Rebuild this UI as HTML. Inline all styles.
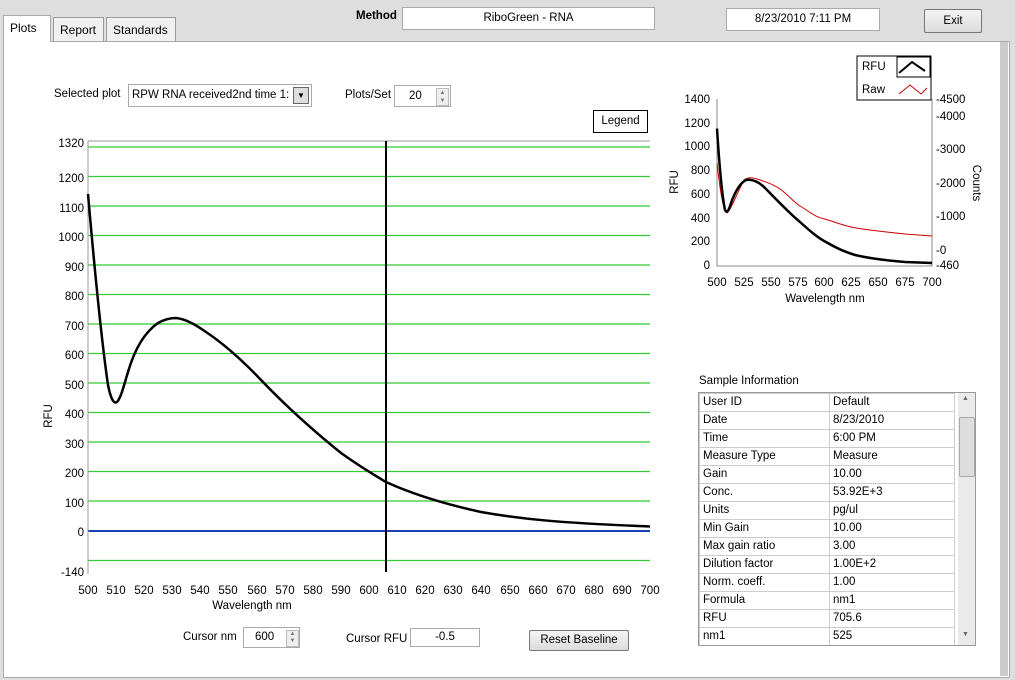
<!DOCTYPE html>
<html><head><meta charset="utf-8"><style>
body{margin:0;width:1015px;height:680px;background:#dedede;font-family:"Liberation Sans",sans-serif;font-size:11.5px;color:#000;position:relative;overflow:hidden}
.a{position:absolute}
.box{position:absolute;background:#fff;border:1px solid #aaa;box-sizing:border-box;text-align:center}
.tab{position:absolute;top:17px;height:24px;background:#f0f0f0;border:1px solid #999;border-bottom:none;box-sizing:border-box;padding:5px 6px 0;font-size:12px}
.btn{position:absolute;background:linear-gradient(#f4f4f4,#dcdcdc);border:1px solid #777;border-radius:2px;box-sizing:border-box;text-align:center}
table{border-collapse:collapse;font-size:11.5px}
td{border:1px solid #ccc;height:17px;padding:0 3px;line-height:17px}
</style></head><body>
<div class="a" style="left:3px;top:41px;width:1005px;height:635px;background:#fff;border:1px solid #aaa"></div>
<div class="tab" style="left:3px;top:15px;height:27px;background:#fff;width:48px;border-color:#aaa">Plots</div>
<div class="tab" style="left:53px;width:51px">Report</div>
<div class="tab" style="left:106px;width:70px">Standards</div>
<div class="a" style="left:356px;top:10px;font-weight:bold">Method</div>
<div class="box" style="left:402px;top:7px;width:253px;height:23px;line-height:21px">RiboGreen - RNA</div>
<div class="box" style="left:726px;top:8px;width:154px;height:23px;line-height:21px">8/23/2010  7:11 PM</div>
<div class="btn" style="left:924px;top:9px;width:58px;height:24px;line-height:22px">Exit</div>
<div class="a" style="left:54px;top:88px">Selected plot</div>
<div class="box" style="left:128px;top:84px;width:184px;height:23px;line-height:20px;text-align:left;padding-left:3px;overflow:hidden">RPW RNA received2nd time 1:</div>
<div class="a" style="left:293px;top:87px;width:16px;height:17px;background:#ddd;border:1px solid #666;box-sizing:border-box;font-size:8px;text-align:center;line-height:15px">▼</div>
<div class="a" style="left:345px;top:89px">Plots/Set</div>
<div class="box" style="left:394px;top:85px;width:57px;height:22px;line-height:20px;text-align:left;padding-left:14px">20</div>
<div class="a" style="left:436px;top:88px;width:11px;height:16px;background:#eee;border:1px solid #bbb;font-size:6px;line-height:8px;text-align:center;color:#777">▲<br>▼</div>
<div class="box" style="left:593px;top:110px;width:55px;height:23px;line-height:21px;border-color:#000">Legend</div>
<svg class="a" style="left:0;top:0" width="1015" height="680" font-family="Liberation Sans" font-size="11.5">
<g stroke="#3c3" stroke-width="1.2">
<line x1="88" x2="650" y1="147" y2="147"/><line x1="88" x2="650" y1="176.5" y2="176.5"/><line x1="88" x2="650" y1="206" y2="206"/><line x1="88" x2="650" y1="235.5" y2="235.5"/><line x1="88" x2="650" y1="265" y2="265"/><line x1="88" x2="650" y1="294.5" y2="294.5"/><line x1="88" x2="650" y1="324" y2="324"/><line x1="88" x2="650" y1="353.5" y2="353.5"/><line x1="88" x2="650" y1="383" y2="383"/><line x1="88" x2="650" y1="412.5" y2="412.5"/><line x1="88" x2="650" y1="442" y2="442"/><line x1="88" x2="650" y1="471.5" y2="471.5"/><line x1="88" x2="650" y1="501" y2="501"/><line x1="88" x2="650" y1="560.5" y2="560.5"/>
</g>
<line x1="88" x2="650" y1="531" y2="531" stroke="#1a3fb0" stroke-width="2"/>
<path d="M88 141H650M88 141V574" stroke="#999" fill="none"/>
<line x1="386" x2="386" y1="141" y2="572" stroke="#000" stroke-width="2"/>
<path d="M88 194C92 240 100 330 108 385C111 400 114 404 117 402C121 398 124 385 128 372C135 348 145 332 158 323C165 319 170 318 176 318C186 319 196 325 206 332C224 344 244 362 262 381C285 405 310 428 341 453C355 463 369 472 386 482C410 493 440 503 481 512C520 519 560 523 650 526.5" stroke="#000" stroke-width="2.5" fill="none" stroke-linejoin="round"/>
<g text-anchor="end">
<text x="84" y="147">1320</text><text x="84" y="182">1200</text><text x="84" y="212">1100</text><text x="84" y="241">1000</text><text x="84" y="271">900</text><text x="84" y="300">800</text><text x="84" y="330">700</text><text x="84" y="359">600</text><text x="84" y="389">500</text><text x="84" y="418">400</text><text x="84" y="448">300</text><text x="84" y="477">200</text><text x="84" y="507">100</text><text x="84" y="536">0</text><text x="84" y="576">-140</text>
</g>
<g text-anchor="middle">
<text x="88" y="594">500</text><text x="116" y="594">510</text><text x="144" y="594">520</text><text x="172" y="594">530</text><text x="200" y="594">540</text><text x="228" y="594">550</text><text x="257" y="594">560</text><text x="285" y="594">570</text><text x="313" y="594">580</text><text x="341" y="594">590</text><text x="369" y="594">600</text><text x="397" y="594">610</text><text x="425" y="594">620</text><text x="453" y="594">630</text><text x="481" y="594">640</text><text x="510" y="594">650</text><text x="538" y="594">660</text><text x="566" y="594">670</text><text x="594" y="594">680</text><text x="622" y="594">690</text><text x="650" y="594">700</text>
<text x="252" y="609">Wavelength nm</text>
</g>
<text transform="translate(52,416) rotate(-90)" text-anchor="middle">RFU</text>
<rect x="857" y="56" width="74" height="44" fill="#fff" stroke="#000"/>
<rect x="897" y="57" width="33" height="20" fill="none" stroke="#000"/>
<text x="862" y="70">RFU</text><text x="862" y="93">Raw</text>
<path d="M899 73L912 62L925 71" stroke="#000" stroke-width="2" fill="none"/>
<path d="M899 94L910 85L921 94L927 88" stroke="#c00" fill="none"/>
<path d="M717 99V266H932V99" stroke="#888" fill="none"/>
<path d="M717 163C720 190 723 210 727 213C731 210 736 195 744 180C748 177 752 177 760 180C770 183 776 186 781.5 190C790 197 795 203 800 206C810 212 815 217 824.5 219C835 222 845 226 851.4 227C865 230 878 231 905 234L932 236" stroke="#c00" fill="none"/>
<path d="M717 128.6C719 160 722 195 725 210C727 214 729 210 731 203C735 192 740 183 746 180C752 179 758 181 765 188C775 198 788 212 800 222C810 231 818 238 826 242C836 248 845 252 855 255C868 258 880 260 905 262L932 263" stroke="#000" stroke-width="2.5" fill="none"/>
<g text-anchor="end">
<text x="710" y="103">1400</text><text x="710" y="127">1200</text><text x="710" y="150">1000</text><text x="710" y="174">800</text><text x="710" y="198">600</text><text x="710" y="222">400</text><text x="710" y="245">200</text><text x="710" y="269">0</text>
</g>
<g><text x="936" y="103">-4500</text><text x="936" y="120">-4000</text><text x="936" y="153">-3000</text><text x="936" y="187">-2000</text><text x="936" y="220">-1000</text><text x="936" y="254">-0</text><text x="936" y="269">-460</text></g>
<g text-anchor="middle"><text x="717" y="286">500</text><text x="744" y="286">525</text><text x="771" y="286">550</text><text x="798" y="286">575</text><text x="824" y="286">600</text><text x="851" y="286">625</text><text x="878" y="286">650</text><text x="905" y="286">675</text><text x="932" y="286">700</text>
<text x="825" y="302">Wavelength  nm</text></g>
<text transform="translate(678,182) rotate(-90)" text-anchor="middle">RFU</text>
<text transform="translate(973,183) rotate(90)" text-anchor="middle">Counts</text>
</svg>
<div class="a" style="left:183px;top:631px">Cursor nm</div>
<div class="box" style="left:243px;top:627px;width:57px;height:21px;line-height:19px;text-align:left;padding-left:11px">600</div>
<div class="a" style="left:286px;top:630px;width:11px;height:15px;background:#eee;border:1px solid #bbb;font-size:6px;line-height:7px;text-align:center;color:#777">▲<br>▼</div>
<div class="a" style="left:346px;top:633px">Cursor RFU</div>
<div class="box" style="left:410px;top:628px;width:70px;height:19px;line-height:17px">-0.5</div>
<div class="btn" style="left:529px;top:630px;width:100px;height:21px;line-height:19px">Reset Baseline</div>
<div class="a" style="left:699px;top:375px">Sample Information</div>
<div class="a" style="left:698px;top:392px;width:276px;height:252px;background:#fff;border:1px solid #999;overflow:hidden">
<table style="width:256px"><colgroup><col style="width:130px"><col></colgroup>
<tr><td>User ID</td><td>Default</td></tr><tr><td>Date</td><td>8/23/2010</td></tr><tr><td>Time</td><td>6:00 PM</td></tr><tr><td>Measure Type</td><td>Measure</td></tr><tr><td>Gain</td><td>10.00</td></tr><tr><td>Conc.</td><td>53.92E+3</td></tr><tr><td>Units</td><td>pg/ul</td></tr><tr><td>Min Gain</td><td>10.00</td></tr><tr><td>Max gain ratio</td><td>3.00</td></tr><tr><td>Dilution factor</td><td>1.00E+2</td></tr><tr><td>Norm. coeff.</td><td>1.00</td></tr><tr><td>Formula</td><td>nm1</td></tr><tr><td>RFU</td><td>705.6</td></tr><tr><td>nm1</td><td>525</td></tr></table>
<div class="a" style="left:259px;top:0;width:17px;height:252px;background:#eaeaea"></div>
<div class="a" style="left:260px;top:24px;width:14px;height:58px;background:#ddd;border:1px solid #aaa;border-radius:2px"></div>
<div class="a" style="left:263px;top:2px;font-size:7px;color:#666">▲</div>
<div class="a" style="left:263px;top:238px;font-size:7px;color:#666">▼</div>
</div>
<div class="a" style="left:1000px;top:42px;width:8px;height:634px;background:#ccc"></div>
</body></html>
